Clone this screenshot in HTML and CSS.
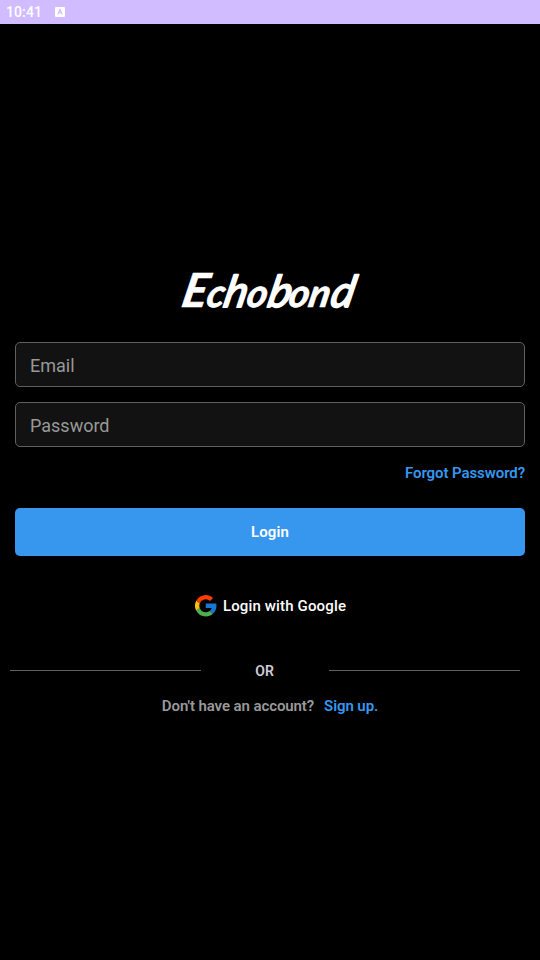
FILE: index.html
```html
<!DOCTYPE html>
<html lang="en">
<head>
<meta charset="utf-8">
<title>Echobond</title>
<link rel="stylesheet" href="styles.css">
</head>
<body>
<header class="status">
  <span class="time">10:41</span>
  <svg class="notice" width="10" height="10" viewBox="0 0 10 10"><rect width="10" height="10" rx="1" fill="#fff"/><path d="M2.7 7.5 5 2.4l2.3 5.1M3.6 5.8h2.8" fill="none" stroke="#cfbaff" stroke-width="1.1"/></svg>
</header>
<main class="screen">
  <h1 class="brand">
    <svg width="180" height="50" viewBox="0 0 180 50"><text class="wordmark" transform="translate(-1 42) skewX(-12)" x="1 26 43 66 87 108 128 150" y="0"><tspan class="initial">E</tspan>c<tspan class="tall">h</tspan>o<tspan class="tall">b</tspan>on<tspan class="tall">d</tspan></text></svg>
  </h1>
  <form class="form">
    <input class="field" type="text" placeholder="Email">
    <input class="field" type="password" placeholder="Password">
    <a class="link forgot">Forgot Password?</a>
    <button class="login" type="button">Login</button>
  </form>
  <div class="google">
    <svg width="22" height="22" viewBox="4 4 41 41">
      <path fill="#1976d2" d="M43.6 20H24v8h11.3a12 12 0 0 1-4.1 5.6l6.2 5.2C37 39.200 44 34 44 24c0-1.300-.1-2.700-.4-4z"/>
      <path fill="#4caf50" d="M24 44c5.200 0 9.900-2 13.400-5.200l-6.200-5.200A12 12 0 0 1 12.700 28l-6.500 5A20 20 0 0 0 24 44z"/>
      <path fill="#ffc107" d="M6.300 14.700A20 20 0 0 0 6.200 33l6.500-5a12 12 0 0 1 .2-8.500z"/>
      <path fill="#ff3d00" d="m6.300 14.700 6.600 4.800A12 12 0 0 1 32 15.100l5.700-5.700A20 20 0 0 0 6.300 14.700z"/>
    </svg>
    <span>Login with Google</span>
  </div>
  <div class="divider"><span>OR</span></div>
  <p class="signup"><span>Don't have an account?</span><a class="link">Sign up.</a></p>
</main>
</body>
</html>
```
FILE: styles.css
```css
* { box-sizing: border-box; }
body {
  margin: 0;
  height: 960px;
  overflow: hidden;
  background: #000;
  color: #fff;
  font: 500 15px/20px Roboto, sans-serif;
}
.status {
  display: flex;
  align-items: center;
  height: 24px;
  padding-left: 6px;
  gap: 13px;
  background: #d0bcff;
}
.time { width: 36px; font-size: 14px; letter-spacing: 0.1px; }
.notice { display: block; }
.screen { display: flex; flex-direction: column; padding-top: 241px; }
.brand { margin: 0 0 27px 180px; height: 50px; }
.brand svg { display: block; overflow: visible; }
.wordmark {
  font: italic 700 39px Lato, cursive;
  fill: #fff;
  stroke: #fff;
  stroke-width: 0.7px;
  stroke-linejoin: round;
}
.initial { font-size: 47px; }
.tall { font-size: 44px; font-weight: 400; stroke-width: 1.8px; }
.form { display: flex; flex-direction: column; padding: 0 15px; gap: 15px; }
.field {
  width: 100%;
  height: 45px;
  padding: 2px 14px 0;
  border: 1px solid #606060;
  border-radius: 5px;
  background: #121212;
  color: #fff;
  font: 400 18px/24px Roboto, sans-serif;
  outline: none;
}
.field::placeholder { color: #999; opacity: 1; }
.link { color: #3797ef; }
.forgot { align-self: flex-end; margin-top: 1px; font-weight: 600; letter-spacing: -0.08px; }
.login {
  height: 48px;
  margin-top: 10px;
  padding: 0;
  border: 0;
  border-radius: 5px;
  background: #3797ef;
  color: #fff;
  font: inherit;
  font-weight: 600;
  letter-spacing: 0.1px;
}
.google {
  display: flex;
  align-items: center;
  justify-content: center;
  gap: 6px;
  height: 22px;
  margin-top: 39px;
  padding-left: 1px;
  letter-spacing: 0.15px;
}
.divider {
  display: flex;
  align-items: center;
  height: 20px;
  margin: 44px 20px 0 10px;
  color: #d0ced8;
  font-size: 14px;
  font-weight: 600;
}
.divider::before, .divider::after {
  content: "";
  flex: 1;
  height: 1px;
  margin-bottom: 1px;
  background: #606060;
}
.divider span { margin: 0 55.500px 0 54.500px; }
.signup {
  display: flex;
  justify-content: center;
  gap: 10px;
  margin: 15px 0 0;
  color: #999;
  font-weight: 600;
  letter-spacing: -0.09px;
}
```
